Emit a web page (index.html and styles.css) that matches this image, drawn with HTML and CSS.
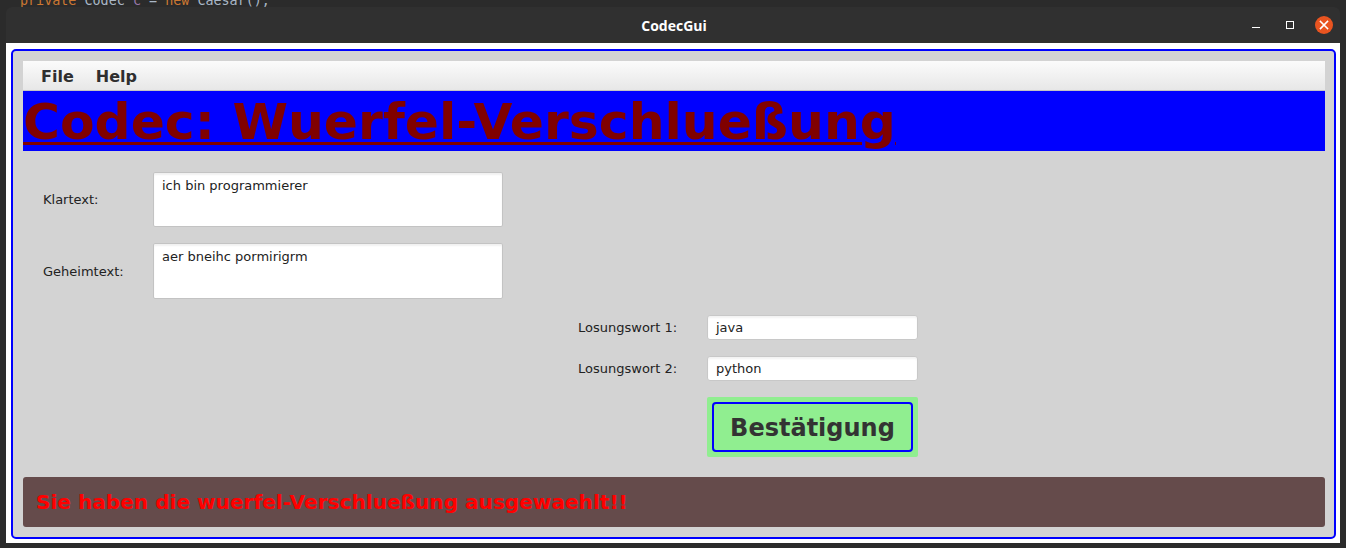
FILE: index.html
```html
<!DOCTYPE html>
<html lang="de">
<head>
<meta charset="utf-8">
<title>CodecGui</title>
<link rel="stylesheet" href="styles.css">
</head>
<body>
<div class="editor">
  <div class="code"><span class="kw">private</span> <span class="ty">Codec</span> <span class="var">c</span> <span class="ty">=</span> <span class="kw">new</span> <span class="ty">Caesar();</span></div>
</div>
<div class="window">
  <div class="titlebar">
    <span class="title">CodecGui</span>
    <div class="controls">
      <span class="ctl min"></span>
      <span class="ctl max"></span>
      <span class="ctl close">
        <svg width="18" height="18" viewBox="0 0 18 18"><path d="M5.5 5.5 L12.5 12.5 M12.5 5.5 L5.5 12.5" stroke="#fff" stroke-width="1.6" stroke-linecap="square"/></svg>
      </span>
    </div>
  </div>
  <div class="content">
    <div class="panel">
      <div class="menubar">
        <span class="menu">File</span>
        <span class="menu">Help</span>
      </div>
      <div class="banner">
        <h1 class="heading">Codec: Wuerfel-Verschlueßung</h1>
      </div>
      <div class="form">
        <div class="row text-row">
          <label class="label wide">Klartext:</label>
          <div class="area">ich bin programmierer</div>
        </div>
        <div class="row text-row tall">
          <label class="label wide">Geheimtext:</label>
          <div class="area">aer bneihc pormirigrm</div>
        </div>
        <div class="row key-row">
          <label class="label key">Losungswort 1:</label>
          <div class="field">java</div>
        </div>
        <div class="row key-row">
          <label class="label key">Losungswort 2:</label>
          <div class="field">python</div>
        </div>
        <div class="row key-row btn-row">
          <span class="label key"></span>
          <div class="btn-wrap"><button class="btn">Bestätigung</button></div>
        </div>
      </div>
      <div class="status">Sie haben die wuerfel-Verschlueßung ausgewaehlt!!</div>
    </div>
  </div>
</div>
</body>
</html>
```

FILE: styles.css
```css
html, body {
  margin: 0;
  padding: 0;
}
body {
  width: 1346px;
  height: 548px;
  background: #2b2b2b;
  overflow: hidden;
  position: relative;
  font-family: "DejaVu Sans", sans-serif;
}
.editor {
  height: 7px;
  overflow: visible;
}
.code {
  font-family: "DejaVu Sans Mono", monospace;
  font-size: 13.4px;
  line-height: 16px;
  margin-top: -7px;
  padding-left: 20px;
  white-space: pre;
  color: #a9b7c6;
}
.kw { color: #cc7832; }
.ty { color: #a9b7c6; }
.var { color: #9876aa; }

.window {
  position: absolute;
  left: 6px;
  top: 7px;
  width: 1334px;
  height: 536px;
  display: flex;
  flex-direction: column;
  border-radius: 6px 6px 0 0;
  overflow: hidden;
}
.titlebar {
  height: 36px;
  background: #303030;
  position: relative;
  display: flex;
  align-items: center;
  justify-content: center;
  flex: none;
}
.title {
  font-family: "Open Sans", "DejaVu Sans", sans-serif;
  font-weight: 700;
  font-size: 14px;
  color: #ffffff;
  margin-left: 2px;
}
.controls {
  position: absolute;
  right: 7px;
  top: 0;
  height: 36px;
  display: flex;
  align-items: center;
}
.ctl {
  display: block;
  flex: none;
}
.min {
  width: 8px;
  height: 1px;
  border-top: 1.5px solid #ffffff;
  margin-top: 5px;
  margin-right: 26px;
}
.max {
  width: 6px;
  height: 6px;
  border: 1.5px solid #ffffff;
  margin-right: 21px;
}
.close {
  width: 18px;
  height: 18px;
  border-radius: 50%;
  background: #e95420;
}
.close svg { display: block; }

.content {
  flex: 1;
  background: #ffffff;
  padding: 6px 4px 4px 5px;
}
.panel {
  height: 490px;
  box-sizing: border-box;
  border: 2px solid #0000ff;
  border-radius: 5px;
  background: #d3d3d3;
  padding: 10px 9px 10px 10px;
  display: flex;
  flex-direction: column;
}
.menubar {
  height: 29px;
  border-bottom: 1px solid #c4c4c4;
  background: linear-gradient(#fbfbfb, #e7e7e7);
  display: flex;
  align-items: center;
  padding-left: 7px;
  flex: none;
}
.menu {
  font-weight: 700;
  font-size: 16px;
  color: #2f2f2f;
  padding: 1px 11px 0 11px;
}
.banner {
  height: 60px;
  background: #0000ff;
  flex: none;
  overflow: hidden;
}
.heading {
  margin: 0;
  padding-top: 1px;
  font-family: "DejaVu Sans", sans-serif;
  font-weight: 700;
  font-size: 50.4px;
  line-height: 60px;
  color: #800000;
  text-decoration: underline;
  text-decoration-thickness: 3px;
  text-underline-offset: 3px;
  white-space: nowrap;
}
.form {
  margin-top: 21px;
  display: flex;
  flex-direction: column;
  gap: 16px;
}
.row {
  display: flex;
  align-items: center;
}
.text-row {
  height: 55px;
  padding-left: 20px;
}
.text-row.tall { height: 56px; }
.key-row {
  height: 25px;
  padding-left: 555px;
}
.btn-row { height: 60px; }
.label {
  font-size: 13px;
  color: #222222;
  flex: none;
}
.label.wide { width: 110px; }
.label.key { width: 129px; }
.area {
  width: 350px;
  height: 100%;
  box-sizing: border-box;
  background: #ffffff;
  border: 1px solid #c3c3c3;
  border-radius: 2px;
  box-shadow: inset 0 2px 2px rgba(0,0,0,0.06);
  padding: 5px 8px;
  font-size: 13px;
  line-height: 16px;
  color: #222222;
}
.field {
  width: 211px;
  height: 25px;
  box-sizing: border-box;
  background: #ffffff;
  border: 1px solid #c8c8c8;
  border-radius: 3px;
  box-shadow: inset 0 2px 2px rgba(0,0,0,0.05);
  padding: 0 8px;
  font-size: 13px;
  line-height: 24px;
  color: #222222;
}
.btn-wrap {
  width: 211px;
  height: 60px;
  box-sizing: border-box;
  background: #90ee90;
  border-radius: 2px;
  padding: 5px;
}
.btn {
  width: 100%;
  height: 100%;
  box-sizing: border-box;
  border: 2px solid #0000ff;
  border-radius: 4px;
  background: #90ee90;
  font-family: "DejaVu Sans", sans-serif;
  font-weight: 700;
  font-size: 24px;
  color: #333333;
  padding: 2px 0 0 0;
  cursor: pointer;
}
.status {
  margin-top: 20px;
  height: 50px;
  background: #654b4b;
  border-radius: 3px;
  display: flex;
  align-items: center;
  padding-left: 13px;
  font-weight: 700;
  font-size: 20.1px;
  color: #ff0000;
  flex: none;
}
```
